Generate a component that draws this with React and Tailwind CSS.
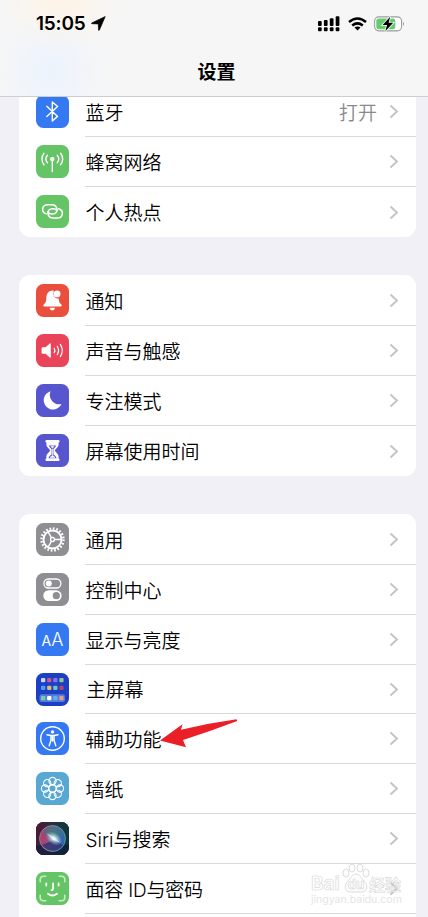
import React from 'react';

const BluetoothIcon = () => (
  <svg viewBox="0 0 33 33" fill="none" stroke="white" strokeWidth="1.4" strokeLinejoin="round" strokeLinecap="round">
    <path d="M10.8 11.3L21.6 21.4L16.3 26V6.9L21.6 11.6L10.8 21.6" />
  </svg>
);

const CellularIcon = () => (
  <svg viewBox="0 0 33 33" fill="none" stroke="white" strokeWidth="1.4" strokeLinecap="round">
    <circle cx="16.3" cy="14" r="2.2" fill="white" stroke="none" />
    <path d="M16.3 15V26.6" />
    <path d="M11.4 10.2a6 6 0 0 0 0 7.6M21.2 10.2a6 6 0 0 1 0 7.6" />
    <path d="M8 8.2a9.200 9.200 0 0 0 0 11.6M24.6 8.2a9.200 9.200 0 0 1 0 11.6" />
  </svg>
);

const HotspotIcon = () => (
  <svg viewBox="0 0 33 33" fill="none" stroke="white" strokeWidth="1.5" strokeLinecap="round">
    <path d="M10.300 18.900C4.800 17.200 5.700 9.700 11.800 9.700h3.800c6.600 0 7.600 9.300 1 9.300h-1.400q-2.400 0-3.200-2.200" />
    <path d="M22.700 13.800c5.500 1.700 4.600 9.200-1.500 9.200h-3.800c-6.600 0-7.600-9.300-1-9.300h1.400q2.400 0 3.200 2.200" />
  </svg>
);

const BellIcon = () => (
  <svg viewBox="0 0 33 33" fill="white">
    <path d="M16.6 6.6c-4.500.4-6.300 3.700-6.300 7.900 0 4-1.200 4.600-2.700 6.200-.6.8-.4 1.700.6 1.700h16.600c1 0 1.200-.9.6-1.700-1.400-1.500-2.500-2.400-2.700-6.100-3.500.2-6.400-3.200-4.900-6.900q.1-1.100-1.200-1.100z" />
    <circle cx="21.1" cy="9.9" r="3.4" />
    <path d="M13.600 23.800h5.400c-.3 3.600-5.100 3.600-5.400 0z" />
  </svg>
);

const SpeakerIcon = () => (
  <svg viewBox="0 0 33 33" fill="none" stroke="white" strokeWidth="1.2" strokeLinecap="round">
    <path d="M5.6 14.300q0-1 1-1h3l4.200-3.700q1-.7 1 .5v12.800q0 1.200-1 .5l-4.200-3.700h-3q-1 0-1-1z" fill="white" stroke="none" />
    <path d="M18.200 14.300q1.300 2.200 0 4.400" />
    <path d="M21.200 12.300q2.700 4.200 0 8.400" />
    <path d="M24.300 10.400q4 6.100 0 12.200" />
  </svg>
);

const MoonIcon = () => (
  <svg viewBox="0 0 33 33" fill="white">
    <path d="M14.600 7.200A9.300 9.300 0 1 0 25.500 20 9.400 9.400 0 0 1 14.600 7.200z" />
  </svg>
);

const HourglassIcon = () => (
  <svg viewBox="0 0 33 33" fill="white">
    <path d="M10.600 6.100h11.800q1.200 0 1.200 1.200t-1 1.300v2c0 3.200-3.600 4.300-3.600 6s3.600 2.800 3.600 6v1.900q1 .1 1 1.300t-1.200 1.200H10.600q-1.200 0-1.200-1.200t1-1.300v-1.900c0-3.200 3.600-4.300 3.600-6s-3.600-2.800-3.600-6v-2q-1-.1-1-1.300t1.200-1.200z" />
    <path d="M12.700 11.500h7.600q-.8 1.700-2.900 3.700v5q2.400 1.300 3.300 4h-8.400q.9-2.700 3.300-4v-5q-2.100-2-2.900-3.700z" fill="#5856ce" />
    <path d="M15 12.300h3l-1.500 2zM16.500 15v6.200l2.500 2.200h-5l2.500-2.200z" stroke="white" strokeWidth=".5" />
  </svg>
);

const GearIcon = () => (
  <svg viewBox="0 0 33 33" fill="none" stroke="white">
    <circle cx="16.500" cy="16.500" r="9" strokeWidth="1.900" />
    <circle cx="16.500" cy="16.500" r="11" strokeWidth="2.400" strokeDasharray="1.700 1.757" />
    <circle cx="16.500" cy="16.500" r="2" strokeWidth="1.300" />
    <path d="M18.500 16.500H25.500M15.500 14.800L12 8.700M15.500 18.200L12 24.300" strokeWidth="1.400" />
  </svg>
);

const ControlIcon = () => (
  <svg viewBox="0 0 33 33" fill="none">
    <rect x="7.900" y="6" width="17" height="9" rx="4.500" stroke="white" strokeWidth="1.300" />
    <circle cx="12.800" cy="10.500" r="3" fill="white" />
    <rect x="7.300" y="17.300" width="18.300" height="10.700" rx="5.300" fill="white" />
    <circle cx="20.300" cy="22.700" r="3.600" fill="#8e8e93" />
  </svg>
);

const AccessibilityIcon = () => (
  <svg viewBox="0 0 33 33" fill="none" stroke="white">
    <circle cx="16.500" cy="16.500" r="11.800" strokeWidth="1.400" />
    <circle cx="16.500" cy="9.900" r="1.700" fill="white" stroke="none" />
    <path
      d="M10.900 12.700L15 13.500h3l4.100-.8M14.900 13.500v5l-1.700 5.300M18.100 13.500v5l1.700 5.300M16.500 13.500v5.500"
      strokeWidth="1.400"
      strokeLinecap="round"
      strokeLinejoin="round"
    />
  </svg>
);

const WallpaperIcon = () => (
  <svg viewBox="0 0 33 33" fill="none" stroke="white" strokeWidth="1.100">
    {[0, 45, 90, 135, 180, 225, 270, 315].map((deg) => (
      <circle key={deg} cx="16.500" cy="9" r="3.600" transform={`rotate(${deg} 16.500 16.500)`} />
    ))}
    <circle cx="16.500" cy="16.500" r="3.600" />
  </svg>
);

const HomeIcon = () => {
  const apps = [
    ['#c9d2f5', '#c65a8c', '#8a6df0', '#8fc48a'],
    ['#49a0f0', '#e0b878', '#68c8bc', '#b9416e'],
    ['#6fd0a4', '#ffffff', '#52b7ef', '#e69c86'],
  ];
  return (
    <svg viewBox="0 0 33 33">
      <rect x="3.500" y="21.300" width="25.500" height="7.700" rx="2" fill="#5a7ad8" />
      {apps.map((row, r) =>
        row.map((color, c) => (
          <rect key={`${r}-${c}`} x={5 + c * 6.1} y={[5, 12.7, 22.900][r]} width="4.300" height="4.300" rx="1" fill={color} />
        ))
      )}
    </svg>
  );
};

const SiriIcon = () => (
  <svg viewBox="0 0 33 33">
    <defs>
      <linearGradient id="siriBg" x1="0" y1="0" x2="1" y2="0.3">
        <stop offset="0" stopColor="#571333" />
        <stop offset="0.5" stopColor="#253044" />
        <stop offset="1" stopColor="#0c3836" />
      </linearGradient>
      <linearGradient id="siriOrb" x1="0" y1="0.4" x2="1" y2="0.6">
        <stop offset="0" stopColor="#c92f6c" />
        <stop offset="0.45" stopColor="#766083" />
        <stop offset="1" stopColor="#2465bd" />
      </linearGradient>
      <radialGradient id="siriGlow">
        <stop offset="0" stopColor="#fff" />
        <stop offset="0.3" stopColor="#c9f4f4" stopOpacity="0.8" />
        <stop offset="1" stopColor="#8fd8e0" stopOpacity="0" />
      </radialGradient>
    </defs>
    <rect width="33" height="33" fill="url(#siriBg)" />
    <rect y="23" width="33" height="10" fill="#161640" opacity=".6" />
    <circle cx="16.500" cy="16.500" r="13" fill="url(#siriOrb)" stroke="#87bcb9" strokeOpacity=".75" strokeWidth=".8" />
    <path d="M6 11Q9 5 17 4.500Q25 5.500 28 13L18 16z" fill="#2f7f80" opacity=".6" />
    <path d="M6 23Q10 28.500 17 28.800Q24 28 27 23L18 18z" fill="#29296c" opacity=".7" />
    <ellipse cx="18" cy="16.500" rx="9" ry="6" fill="url(#siriGlow)" transform="rotate(35 18 16.500)" />
    <path d="M10 11L18 15L24 20.500L17 18z" fill="white" opacity=".5" />
  </svg>
);

const FaceIcon = () => (
  <svg viewBox="0 0 33 33" fill="none" stroke="white" strokeLinecap="round">
    <path
      d="M4.200 9.800V7.500Q4.200 4.200 7.500 4.200h2.300M23.200 4.200h2.300q3.300 0 3.300 3.300v2.300M28.800 23.200v2.300q0 3.300-3.300 3.300h-2.300M9.800 28.800H7.500q-3.300 0-3.300-3.300v-2.300"
      strokeWidth="1.600"
      strokeOpacity=".65"
    />
    <path d="M10.300 11.300v2.200M22.600 11.300v2.200M17.100 11.300v5.500q0 1.300-1.600 1.300M12 21.700q4.500 3.500 9 0" strokeWidth="1.800" />
  </svg>
);

const groups = [
  [
    { label: '蓝牙', value: '打开', bg: 'bg-[#3478f2]', icon: <BluetoothIcon /> },
    { label: '蜂窝网络', bg: 'bg-[#65c466]', icon: <CellularIcon /> },
    { label: '个人热点', bg: 'bg-[#65c466]', icon: <HotspotIcon /> },
  ],
  [
    { label: '通知', bg: 'bg-[#ea4e3d]', icon: <BellIcon /> },
    { label: '声音与触感', bg: 'bg-[#ea445a]', icon: <SpeakerIcon /> },
    { label: '专注模式', bg: 'bg-[#5856ce]', icon: <MoonIcon /> },
    { label: '屏幕使用时间', bg: 'bg-[#5856ce]', icon: <HourglassIcon /> },
  ],
  [
    { label: '通用', bg: 'bg-[#8e8e93]', icon: <GearIcon /> },
    { label: '控制中心', bg: 'bg-[#8e8e93]', icon: <ControlIcon /> },
    {
      label: '显示与亮度',
      bg: 'bg-[#3478f2]',
      icon: (
        <span className="flex h-full items-baseline justify-center pt-[4px] font-['Inter'] leading-[26px] text-white">
          <span className="text-[14px]">A</span>
          <span className="text-[18px] font-light">A</span>
        </span>
      ),
    },
    { label: '主屏幕', bg: 'bg-[#1c3fc4]', icon: <HomeIcon />, short: true, indent: true },
    { label: '辅助功能', bg: 'bg-[#3478f2]', icon: <AccessibilityIcon />, pointed: true },
    { label: '墙纸', bg: 'bg-[#59a8d4]', icon: <WallpaperIcon /> },
    { label: 'Siri与搜索', bg: 'bg-[#222]', icon: <SiriIcon /> },
    { label: '面容 ID与密码', bg: 'bg-[#65c466]', icon: <FaceIcon />, tight: true },
  ],
];

const Arrow = () => (
  <svg className="absolute left-[140px] top-[3px] h-[33px] w-[80px]" viewBox="0 0 80 33">
    <path d="M1 23.500L23.500 7.300L22 12.700Q50 6 77.500 2.200L78.300 4Q52 14 24 23L27 30.200z" fill="#ea1f27" />
  </svg>
);

function Row({ item, last }) {
  return (
    <div className={`relative flex shrink-0 pl-[17px] ${item.short ? 'h-[49px]' : 'h-[50px]'}`}>
      <div className={`mt-2 size-[33px] shrink-0 overflow-hidden rounded-[7.5px] ${item.bg}`}>{item.icon}</div>
      <div className={`ml-4 flex flex-1 items-center pr-[17px] ${last ? '' : 'border-b border-[#d9d9dc]'}`}>
        <span
          className={`flex-1 whitespace-pre pt-[3px] text-[19px] font-[350] leading-none text-black ${item.indent ? 'pl-[1.5px]' : 'pl-[0.5px]'} ${item.tight ? 'tracking-[-0.2px]' : ''}`}
        >
          {item.label}
        </span>
        {item.value && (
          <span className="mr-3 pt-[3px] text-[19px] font-[350] leading-none text-[#8a8a8e]">{item.value}</span>
        )}
        <svg className="h-[15px] w-[10px]" viewBox="0 0 10 15" fill="none" stroke="#c2c2c5" strokeWidth="1.800">
          <path d="M1.500 1.500L8 7.500L1.500 13.500" />
        </svg>
      </div>
      {item.pointed && <Arrow />}
    </div>
  );
}

function Header() {
  return (
    <div className="relative z-10 h-[97px] shrink-0 border-b border-[#cdcdd0] bg-[#f6f6f6] bg-[radial-gradient(circle_at_60px_-15px,#fff3e4_0,transparent_65px),radial-gradient(circle_at_50px_72px,#ecf3fd_0,transparent_60px)]">
      <div className="flex h-[47px] items-center pl-[36px] pr-[23px]">
        <span className="font-['Inter'] text-[19px] font-semibold leading-none tracking-[-0.2px]">15:05</span>
        <svg className="ml-[5px] size-[15px]" viewBox="0 0 15 15">
          <path d="M14.200.6L8.400 14Q7.700 15 7.500 14L7.300 7.900L1 7.700Q0 7.500.8 6.900z" stroke="black" strokeWidth=".7" strokeLinejoin="round" />
        </svg>
        <svg className="ml-auto h-[16px] w-[22px]" viewBox="0 0 22 16">
          {[5, 4, 2.3, 0.3].map((top, i) => (
            <g key={top}>
              <rect x={i * 5.9} y={top} width="3.700" height={10 - top} rx="1" />
              <rect x={i * 5.9} y="11.300" width="3.700" height="4" rx="1" />
            </g>
          ))}
        </svg>
        <svg className="ml-[8px] h-[14px] w-[19px]" viewBox="0 0 19 14" fill="none" stroke="black" strokeWidth="2.500">
          <path d="M1 5Q9.500-2 18 5" />
          <path d="M4.200 8.500Q9.500 4.200 14.800 8.500" />
          <path d="M9.500 13.500L6.500 10.500Q9.500 8.300 12.500 10.500z" fill="black" stroke="none" />
        </svg>
        <svg className="ml-[7px] h-[16px] w-[31px]" viewBox="0 0 31 16">
          <rect x=".6" y=".9" width="27" height="14" rx="4.300" fill="white" stroke="#9c9c9e" strokeWidth="1.100" />
          <rect x="2.300" y="2.600" width="19" height="10.600" rx="2.600" fill="#65cc6d" />
          <path d="M29 5.700q2 2.200 0 4.400z" fill="#9c9c9e" />
          <path d="M16.200.8L8.600 9H13l-1.700 6.200L19.200 6.800h-4.600z" stroke="white" strokeWidth="1.600" paintOrder="stroke" />
        </svg>
      </div>
      <h1 className="pl-[5px] pt-[16px] text-center text-[19px] font-bold leading-[20px] text-black">设置</h1>
    </div>
  );
}

const Watermark = () => (
  <div className="absolute bottom-[10px] right-[27px] w-[90px] text-[#fdfdfd] opacity-80 [-webkit-text-stroke:0.6px_#cfcfcf]">
    <svg className="mx-auto -mb-[19px] h-[31px] w-[28px]" viewBox="0 0 28 31" fill="#fcfcfc" stroke="#d0d0d0" strokeWidth=".9">
      <ellipse cx="4" cy="10" rx="3" ry="4" />
      <ellipse cx="10" cy="5" rx="3" ry="4" />
      <ellipse cx="18" cy="5" rx="3" ry="4" />
      <ellipse cx="24" cy="10" rx="3" ry="4" />
      <path d="M14 11c4 0 5 4 8 7c4 3 4 11-2 11h-12c-6 0-6-8-2-11c3-3 4-7 8-7z" />
    </svg>
    <div className="relative flex items-center justify-between font-['Inter'] text-[19px] font-bold leading-[18px]">
      <span className="w-[32px]">Bai</span>
      <span className="text-[13px]">du</span>
      <span className="w-[32px] font-['Noto_Sans_CJK_SC'] text-[16px]">经验</span>
    </div>
    <div className="whitespace-nowrap font-['Inter'] text-[10.5px] leading-[14px] text-[#e0e0e0] [-webkit-text-stroke:0]">
      jingyan.baidu.com
    </div>
  </div>
);

export default function App() {
  return (
    <div className="relative flex h-[917px] w-[428px] flex-col overflow-hidden bg-[#f1f0f6] font-['Inter','Noto_Sans_CJK_SC',sans-serif]">
      <Header />
      <div className="-mt-[10px] flex flex-1 flex-col gap-[38px] pl-[19px] pr-3">
        {groups.map((items, i) => (
          <div
            key={i}
            className={`flex shrink-0 flex-col overflow-hidden bg-white ${i > 0 ? 'pt-px' : ''} ${i === 2 ? 'rounded-t-[11px] pb-3' : 'rounded-[11px]'}`}
          >
            {items.map((item, j) => (
              <Row key={item.label} item={item} last={j === items.length - 1 && i < 2} />
            ))}
          </div>
        ))}
      </div>
      <Watermark />
    </div>
  );
}
